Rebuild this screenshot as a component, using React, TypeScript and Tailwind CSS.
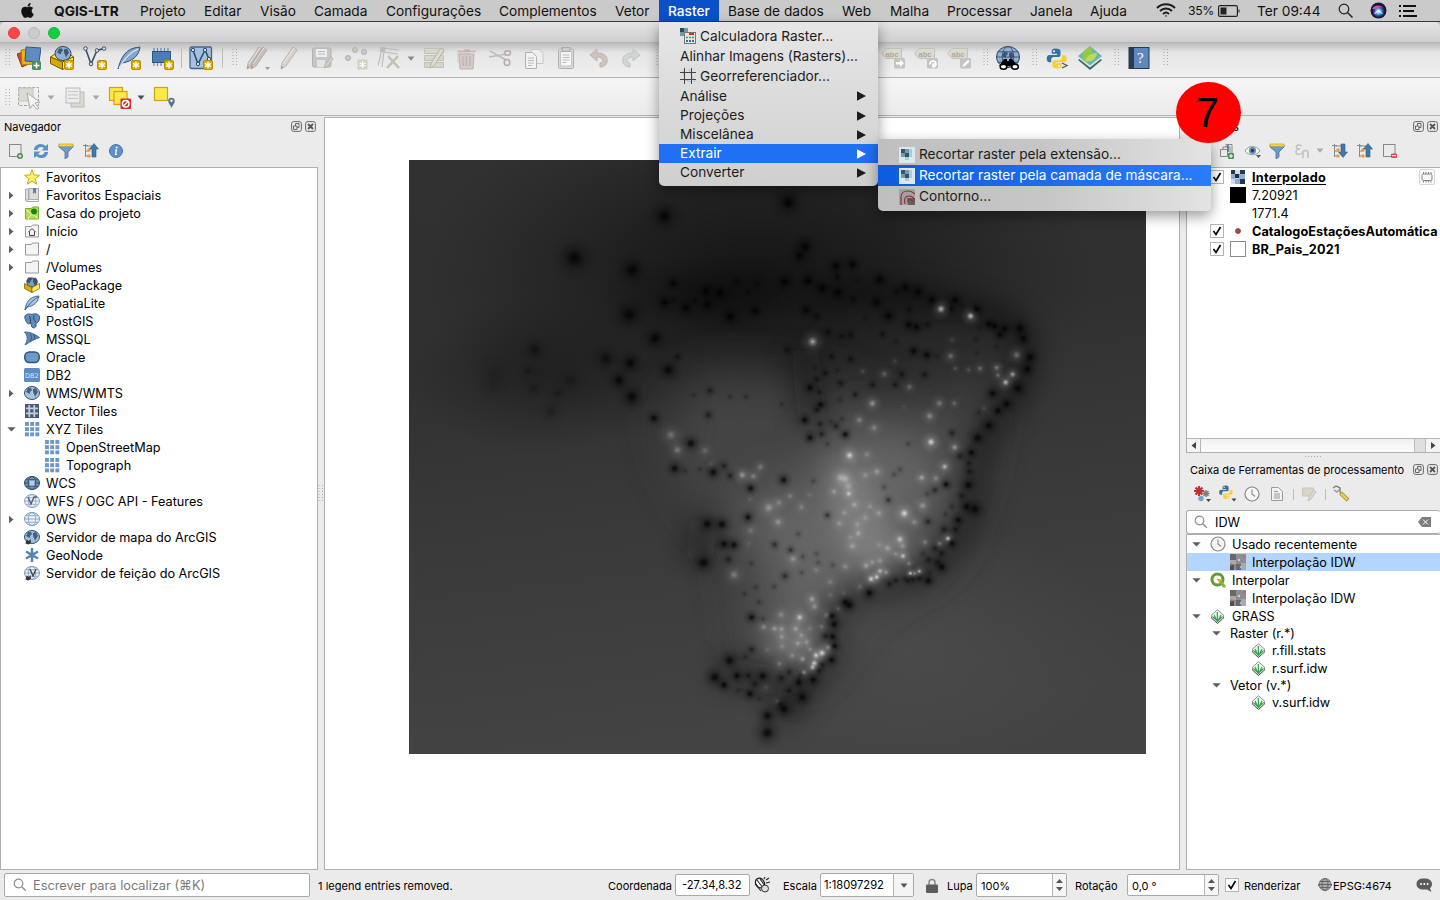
import React from "react";
import { FaApple } from "react-icons/fa";

type P = { children?: React.ReactNode; className?: string };

const Svg = ({ s = 16, className = "", children }: P & { s?: number }) => (
  <svg width={s} height={s} viewBox={`0 0 ${s} ${s}`} className={`shrink-0 ${className}`} fill="none">
    {children}
  </svg>
);

/* ---------- small shared glyphs ---------- */

const Star = () => (
  <g>
    <rect x="14.5" y="14.5" width="9" height="9" rx="1.5" fill="#d9a900" stroke="#b98d00" />
    <path d="M19 15.5v7M16 17.3l6 3.4M22 17.3l-6 3.4" stroke="#fff" strokeWidth="1.4" />
  </g>
);

const Caret = ({ className = "", color = "#6b6b6b" }: { className?: string; color?: string }) => (
  <svg width="8" height="5" viewBox="0 0 8 5" className={`shrink-0 ${className}`}>
    <path d="M0.5 0.5h7L4 4.7z" fill={color} />
  </svg>
);

const Handle = ({ className = "", h = 18 }: { className?: string; h?: number }) => (
  <svg width="6" height={h} className={`shrink-0 ${className}`}>
    <path d={`M1 0v${h}M4.5 0v${h}`} stroke="#a9a9a9" strokeWidth="1" strokeDasharray="1 2" />
  </svg>
);

const Sep = ({ className = "" }: { className?: string }) => (
  <div className={`h-5 w-px shrink-0 bg-[#bdbdbd] ${className}`} />
);

const Globe = ({ cx = 8, cy = 8, rx = 7.5, ry = 6.5, fill = "#7b9cc4", line = "#2f4d73", land = true, grid = false }) => (
  <g>
    <ellipse cx={cx} cy={cy} rx={rx} ry={ry} fill={fill} stroke={line} strokeWidth="1" />
    {land && (
      <path
        d={`M${cx - 6} ${cy - 1}l2-4 3 0 1 2-2 2 0 2-2-1zM${cx + 1} ${cy - 4}l3-1 2 4-2 3-1 2-1-3-1-2z`}
        fill={line}
        opacity=".85"
      />
    )}
    {grid && (
      <g stroke={line} strokeWidth=".8">
        <ellipse cx={cx} cy={cy} rx={rx / 2} ry={ry} />
        <path d={`M${cx - rx} ${cy}h${rx * 2}M${cx - rx + 1} ${cy - ry / 2}h${rx * 2 - 2}M${cx - rx + 1} ${cy + ry / 2}h${rx * 2 - 2}`} />
      </g>
    )}
  </g>
);

const Python = () => (
  <g>
    <path d="M8 0.5c-3 0-3.5 1-3.5 2.5V5H9v1H2.500C1 6 .2 7.200.2 9.200s.9 3 2.300 3H4V10c0-1.500 1-2.300 2.300-2.300h4C11.500 7.700 12 6.800 12 5.800V3C12 1.200 10.600.5 8 .5z" fill="#36719f" />
    <circle cx="6.400" cy="2.800" r=".8" fill="#fff" />
    <path d="M9 17.500c3 0 3.800-1 3.800-2.400v-2H8v-1h7c1.500 0 2.300-1.200 2.300-3.200s-1-3-2.300-3h-1.700v2.200c0 1.500-1 2.400-2.300 2.400H7c-1.300 0-2 .9-2 2v2.400c0 1.800 1.500 2.600 4 2.600z" fill="#fbcf3b" />
    <circle cx="10.800" cy="15.300" r=".8" fill="#fff" />
  </g>
);

/* ---------- application menu bar ---------- */

const menus: [string, string][] = [
  ["QGIS-LTR", "w-[86px] font-bold"],
  ["Projeto", "w-[64px]"],
  ["Editar", "w-[56px]"],
  ["Visão", "w-[54px]"],
  ["Camada", "w-[72px]"],
  ["Configurações", "w-[113px]"],
  ["Complementos", "w-[116px]"],
  ["Vetor", "w-[44px]"],
];
const menus2: [string, string][] = [
  ["Base de dados", "w-[114px]"],
  ["Web", "w-[48px]"],
  ["Malha", "w-[57px]"],
  ["Processar", "w-[83px]"],
  ["Janela", "w-[60px]"],
  ["Ajuda", "w-[66px]"],
];

function MenuBar() {
  return (
    <div className="flex h-[22px] shrink-0 items-center border-b border-[#3a3a3a] bg-[#cacaca] text-[13.7px] text-[#111]">
      <FaApple className="ml-[20px] h-[17px] w-[15px] shrink-0" />
      <div className="w-[19px] shrink-0" />
      {menus.map(([t, c]) => (
        <span key={t} className={`shrink-0 whitespace-nowrap pt-[2px] ${c}`}>{t}</span>
      ))}
      <span className="flex h-[21px] w-[60px] shrink-0 items-center bg-[#0a50c8] pl-[9px] pt-[2px] font-medium text-white">Raster</span>
      <div className="w-[9px] shrink-0" />
      {menus2.map(([t, c]) => (
        <span key={t} className={`shrink-0 whitespace-nowrap pt-[2px] ${c}`}>{t}</span>
      ))}
      <svg width="20" height="15" viewBox="0 0 20 15" fill="none" stroke="#1a1a1a" strokeWidth="1.900">
        <path d="M1 5c5-5 13-5 18 0M4 8c3.500-3.300 8.500-3.300 12 0M7 11c1.800-1.700 4.200-1.700 6 0" />
        <path d="M8.800 12.600L10 14l1.200-1.400z" fill="#1a1a1a" stroke="none" />
      </svg>
      <span className="ml-[12px] w-[30px] pt-[2px] text-[12.200px] tracking-tight">35%</span>
      <svg width="23" height="12" viewBox="0 0 23 12" fill="none">
        <rect x=".6" y=".6" width="18.800" height="10.800" rx="1.500" stroke="#222" strokeWidth="1.200" />
        <rect x="2.500" y="2.500" width="6" height="7" fill="#222" />
        <path d="M20.500 4v4c1.500-.5 1.500-3.500 0-4z" fill="#222" />
      </svg>
      <span className="ml-[16px] w-[81px] whitespace-nowrap pt-[2px]">Ter 09:44</span>
      <svg width="15" height="15" viewBox="0 0 15 15" fill="none" stroke="#222" strokeWidth="1.200">
        <circle cx="6" cy="6" r="4.800" /><path d="M9.500 9.500l5 5" strokeWidth="1.500" />
      </svg>
      <svg width="17" height="17" viewBox="0 0 17 17" className="ml-[17px]">
        <defs>
          <radialGradient id="siri"><stop offset="0" stopColor="#fff" /><stop offset=".3" stopColor="#6ad8f0" /><stop offset=".65" stopColor="#3b50b8" /><stop offset="1" stopColor="#151540" /></radialGradient>
        </defs>
        <circle cx="8.500" cy="8.500" r="8" fill="#191335" />
        <circle cx="8.500" cy="9.500" r="6.300" fill="url(#siri)" />
        <path d="M2 7c2-4 7-5 12-1-3-1-5-1-7 1z" fill="#d54cae" />
        <path d="M4.500 12l4-4 4 4" stroke="#fff" strokeWidth="1" fill="none" />
      </svg>
      <svg width="18" height="12" viewBox="0 0 18 12" className="ml-[12px]" stroke="#111" strokeWidth="2">
        <path d="M0 1h2M4 1h13M0 6h2M4 6h11M0 11h2M4 11h14" />
      </svg>
    </div>
  );
}

/* ---------- toolbars ---------- */

const Pencil = ({ x = 0, o = 1, fill = "#d2ccc2" }) => (
  <g transform={`translate(${x} 0)`} opacity={o}>
    <path d="M16 1l4 3L9 20l-5 3 1-6z" fill={fill} stroke="#aaa49c" />
    <path d="M17 2L6 18" stroke="#efece8" strokeWidth="1" />
    <path d="M4 23l.5-3 2 1.500z" fill="#888" />
  </g>
);

const LabelIcon = ({ className, kind }: { className: string; kind: number }) => (
  <Svg s={24} className={className}>
    <path d="M0.500 7.500L5 2.500h15.500v10H5z" fill="#dcdad0" stroke="#c3c0b4" />
    <text x="4.500" y="10.500" fontSize="7.500" fontWeight="700" fill="#aaa89e" fontFamily="Liberation Sans, sans-serif">abc</text>
    <rect x="13" y="12" width="11" height="10.500" rx="1.500" fill="#c4c4c2" />
    {kind === 0 && <path d="M15 16h4v-2.500l4 3.800-4 3.800v-2.600h-4z" fill="#fff" />}
    {kind === 1 && <path d="M16 18.500a3 3 0 1 1 3 2.500M19 21.500v-3.500h3" stroke="#fff" strokeWidth="1.700" />}
    {kind === 2 && <path d="M15.500 21l1-3 4.500-4 1.500 1.500-4.500 4.500z" fill="#fff" />}
  </Svg>
);

function ToolbarMain() {
  return (
    <div className="flex h-[35px] shrink-0 items-center border-b border-[#b2b2b2] bg-gradient-to-b from-[#bdbdbd] via-[#e6e6e6] via-30% to-[#f0f0f0] pb-[4px]">
      <Handle className="ml-[5px]" />
      <Svg s={24} className="ml-[6px]">
        <path d="M0 8l12-4 4 12-11 5z" fill="#c4501f" stroke="#8e3a17" />
        <path d="M4 4l13-1-1 15-11 1z" fill="#e8b31d" stroke="#a57c0c" />
        <path d="M9 1l15 1-2 14-14-1z" fill="#5f8cc0" stroke="#31577f" />
        <rect x="15" y="15" width="9" height="9" rx="1.500" fill="#4f8c58" /><path d="M19.500 16.500v6M16.500 19.500h6" stroke="#fff" strokeWidth="1.600" />
      </Svg>
      <Svg s={24} className="ml-[9px]">
        <path d="M.5 11l6-4 6 2 6-2 5 4-11 5z" fill="#ffe86a" stroke="#7a5a00" />
        <Globe cx={13} cy={7.500} rx={8} ry={7} fill="#8eb0d6" line="#31465f" />
        <path d="M.5 11l12 5v7.500l-12-6z" fill="#d9a900" stroke="#7a5a00" /><path d="M12.500 16l11-5v7l-11 5.500z" fill="#fcf15c" stroke="#7a5a00" />
        <Star />
      </Svg>
      <Svg s={24} className="ml-[9px]">
        <path d="M2.500 2.500L8 18 14 4.500l7-2" stroke="#3d5064" strokeWidth="1.600" />
        {[[2.500, 2.500], [8, 18], [14, 4.500], [21, 2.500]].map(([x, y]) => <circle key={x} cx={x} cy={y} r="1.800" fill="#dce6ee" stroke="#3d5064" />)}
        <Star />
      </Svg>
      <Svg s={24} className="ml-[10px]">
        <path d="M1 23C4 12 8 2 23 1c-1 8-6 14-18 16z" fill="#84a6cd" stroke="#34547a" /><path d="M2 22C7 13 12 7 21 3" stroke="#dce9f7" strokeWidth="1.300" />
        <Star />
      </Svg>
      <Svg s={24} className="ml-[9px]">
        <path d="M4 2v18M7.500 2v18M11 2v18M14.500 2v18M18 2v18" stroke="#6787ad" strokeWidth="1.200" />
        <rect x="2.500" y="5.500" width="18" height="11" fill="#4c7cb5" stroke="#2e5484" /><Star />
      </Svg>
      <Sep className="ml-[7px]" />
      <Svg s={24} className="ml-[7px]">
        <rect x="1" y="1" width="21.500" height="21.500" rx="1.500" fill="#a5c0e1" stroke="#41658e" strokeWidth="1.300" />
        <path d="M4 4l5 14 7-14 4 9" stroke="#27496f" strokeWidth="1.500" />
        {[[4, 4], [9, 18], [16, 4], [20, 13]].map(([x, y]) => <circle key={x} cx={x} cy={y} r="1.700" fill="#dce6ee" stroke="#27496f" />)}
        <Star />
      </Svg>
      <Sep className="ml-[9px]" />
      <Handle className="ml-[9px]" />
      <Svg s={24} className="ml-[8px]"><Pencil x={-3} o={0.8} fill="#c0b4b0" /><Pencil x={1} o={0.8} fill="#c0b4b0" /><path d="M19 21h5l-2.500 3z" fill="#999" /></Svg>
      <Svg s={24} className="ml-[7px]"><Pencil o={0.75} /></Svg>
      <Svg s={24} className="ml-[9px]">
        <rect x="2.500" y="2" width="18.500" height="19" rx="1.500" fill="#c6c6c6" stroke="#b0b0b0" /><rect x="6" y="3" width="11" height="8" fill="#eee" /><path d="M8 5.500h7M8 8h7" stroke="#bbb" /><rect x="7" y="14" width="8" height="7" fill="#e4e4e4" />
        <path d="M21 11l2 2-6 8-3 1 1-3z" fill="#d8d0c8" stroke="#bbb3ab" />
      </Svg>
      <Svg s={24} className="ml-[10px]">
        {[[4, 12], [11, 4], [20, 6]].map(([x, y]) => <circle key={x} cx={x} cy={y} r="2.500" fill="#c8c8c8" stroke="#b0b0b0" />)}
        <rect x="13.500" y="13.500" width="10" height="10" rx="1" fill="#d2cfc0" /><path d="M18.500 15v7M15.500 16.800l6 3.400M21.500 16.800l-6 3.400" stroke="#fff" strokeWidth="1.300" />
      </Svg>
      <Svg s={24} className="ml-[10px]">
        <path d="M4 3L0 20M6 5L4 21M4 2l17 2M5 6l15 2" stroke="#bbb" strokeWidth="1.100" /><rect x="2" y="1" width="5" height="5" fill="#bbb" />
        <path d="M10 10l11 12M20 10L9 22" stroke="#c3c0b2" strokeWidth="2.500" />
      </Svg>
      <Caret className="ml-[5px]" color="#8b8b8b" />
      <Svg s={24} className="ml-[7px]">
        <path d="M2.500 2.500h19v5h-19zM2.500 9.500h19v5h-19zM2.500 16.500h19v5h-19z" fill="#d6d6ca" stroke="#c2c2b4" />
        <path d="M19 2l3 2L12 20l-4 2 1-5z" fill="#e0dad5" stroke="#bbb3ab" />
      </Svg>
      <Svg s={24} className="ml-[8px]">
        <path d="M3 2h13v15H3z" fill="#dcd8d4" /><path d="M5 8h15l-1 15H6z" fill="#d6cbc9" stroke="#bdb1af" /><path d="M4 5.500h18M10 4h6M9 10v10M12.500 10v10M16 10v10" stroke="#c2b7b5" strokeWidth="1.500" />
      </Svg>
      <Svg s={24} className="ml-[10px]">
        <path d="M2 5l16 9M1 11l17-3" stroke="#bdbdbd" strokeWidth="1.500" /><ellipse cx="19.500" cy="7" rx="3" ry="2.300" stroke="#b5aeac" strokeWidth="1.600" /><ellipse cx="19" cy="16.500" rx="2.800" ry="3" stroke="#b5aeac" strokeWidth="1.600" />
      </Svg>
      <Svg s={24} className="ml-[9px]">
        <path d="M10 3.500h8l4 4v10H10z" fill="#eee" stroke="#c5c5c5" /><path d="M4.500 6.500h7l4 4v12h-11z" fill="#f3f3f3" stroke="#b3b3b3" /><path d="M7 12h6M7 14.500h6M7 17h6M7 19.500h4" stroke="#bbb" />
      </Svg>
      <Svg s={24} className="ml-[9px]">
        <rect x="4.500" y="3" width="15" height="19.500" rx="1" fill="#dcdbd7" stroke="#b3b1ac" /><rect x="6.500" y="5.500" width="11" height="14.500" fill="#f6f6f6" stroke="#c5c5c5" /><rect x="8" y="1.500" width="8" height="4" fill="#ccc" stroke="#aaa" /><path d="M8.500 9h7M8.500 11.500h7M8.500 14h7M8.500 16.500h4" stroke="#bbb" />
      </Svg>
      <Svg s={24} className="ml-[9px]"><path d="M3 9l7-6v4c8 0 11 4 10 9-1 4-4 5-7 5v-4c4 0 4-6-3-6v4z" fill="#ccc4bf" stroke="#bcb4af" /></Svg>
      <Svg s={24} className="ml-[8px]"><path d="M21 9l-7-6v4C6 7 3 11 4 16c1 4 4 5 7 5v-4c-4 0-4-6 3-6v4z" fill="#d2d6d2" stroke="#c0c4c0" /></Svg>
      <Handle className="ml-[13px]" />
      <LabelIcon className="ml-[219px]" kind={0} />
      <LabelIcon className="ml-[9px]" kind={1} />
      <LabelIcon className="ml-[9px]" kind={2} />
      <Handle className="ml-[12px]" />
      <Svg s={24} className="ml-[7px]">
        <Globe cx={12} cy={11} rx={11.500} ry={10.500} fill="#8fb1d8" line="#31465f" grid />
        <path d="M8 13h3v2h2v-2h3l6 7H3z" fill="#000" /><ellipse cx="7.500" cy="20.700" rx="3.300" ry="2.500" fill="#fff" stroke="#000" strokeWidth="1.500" /><ellipse cx="19" cy="20.700" rx="3.300" ry="2.500" fill="#fff" stroke="#000" strokeWidth="1.500" />
      </Svg>
      <Handle className="ml-[12px]" />
      <Svg s={24} className="ml-[7px]">
        <g transform="translate(1.500 2) scale(1.170)"><Python /></g><path d="M17 17l5 2.500-5 2.500" stroke="#555" strokeWidth="1.300" />
      </Svg>
      <Svg s={24} className="ml-[9px]">
        <path d="M12 5l12 9-12 10L0 14z" fill="#43625f" /><path d="M12 3l12 9-12 9.500L0 12z" fill="#d8ecea" /><path d="M12 0l12 10-12 9.500L0 10z" fill="#6bb5b0" />
        <path d="M5 15C3 6 8 2 13 1c3 6 0 12-8 14z" fill="#93c93f" /><path d="M7 15c2-6 7-8 12-8 0 5-5 10-12 8z" fill="#b9dc5a" />
      </Svg>
      <Handle className="ml-[12px]" />
      <Svg s={24} className="ml-[7px]">
        <rect x="2" y="1.500" width="20" height="21" fill="#5b88be" stroke="#27394d" /><rect x="2" y="1.500" width="5" height="21" fill="#2a3b4f" />
        <text x="10" y="17" fontSize="15" fill="#fff" fontFamily="Liberation Serif, serif">?</text>
      </Svg>
      <Handle className="ml-[12px]" />
    </div>
  );
}

function ToolbarSelection() {
  return (
    <div className="flex h-[38px] shrink-0 items-center border-b border-[#b2b2b2] bg-gradient-to-b from-[#f6f6f6] to-[#ebebeb] pt-[2px]">
      <Handle className="ml-[5px]" />
      <Svg s={24} className="ml-[6px]">
        <rect x="1.500" y="1.500" width="20" height="18" stroke="#a5a5a5" strokeDasharray="3 1.500" /><rect x="2" y="2" width="14" height="13" fill="#dcdad0" stroke="#c8c6bb" />
        <path d="M10 7l13 9-5 1 4 5-2 1.500-4-5-3 4z" fill="#f5f5f5" stroke="#aaa" />
      </Svg>
      <Caret className="ml-[6px]" color="#a8a8a8" />
      <Svg s={24} className="ml-[8px]">
        <rect x="8" y="6" width="13" height="15" fill="#dcdad0" stroke="#bbb9b0" /><rect x="3" y="2" width="14" height="15" fill="#ececec" stroke="#bbb" /><path d="M5 5.500h10M5 9h10M5 12.500h10" stroke="#c6c6c6" strokeWidth="1.200" />
      </Svg>
      <Caret className="ml-[5px]" color="#a8a8a8" />
      <Svg s={24} className="ml-[8px]">
        <rect x="1.500" y="1.500" width="13" height="13" fill="#fbe84d" stroke="#cda50f" strokeWidth="1.200" /><rect x="6" y="5.500" width="13" height="13" fill="#fbe84d" stroke="#cda50f" strokeWidth="1.200" />
        <rect x="12.500" y="12.500" width="10.500" height="10.500" rx="1" fill="#d62c2c" /><circle cx="17.700" cy="17.700" r="3.300" stroke="#fff" strokeWidth="1.500" /><path d="M15.500 20l4.500-4.500" stroke="#fff" strokeWidth="1.300" />
      </Svg>
      <Caret className="ml-[5px]" color="#4e4e4e" />
      <Svg s={24} className="ml-[8px]">
        <rect x="1.500" y="1.500" width="13" height="13" fill="#fbe84d" stroke="#cda50f" strokeWidth="1.200" />
        <path d="M18.500 22c-1-3-3.300-4.500-3.300-7a3.300 3.300 0 0 1 6.600 0c0 2.500-2.300 4-3.300 7z" fill="#4f7693" /><circle cx="18.500" cy="14.800" r="1.200" fill="#fff" />
      </Svg>
    </div>
  );
}

/* ---------- docks ---------- */

const DockButtons = ({ className = "" }: P) => (
  <div className={`flex gap-[3px] pb-px ${className}`}>
    <Svg s={11}><rect x=".6" y=".6" width="9.800" height="9.800" rx="2" stroke="#666" /><path d="M2.500 5h3.500v3.500H2.500zM4.500 5V2.500H8v4H6" stroke="#666" /></Svg>
    <Svg s={11}><rect x=".6" y=".6" width="9.800" height="9.800" rx="2" stroke="#666" /><path d="M3 3l5 5M8 3L3 8" stroke="#555" strokeWidth="1.800" /></Svg>
  </div>
);

const AddIcon = () => <Svg><rect x="1.500" y="1.500" width="11.500" height="12" stroke="#888" /><circle cx="12" cy="13" r="3" fill="#4f8c58" /><path d="M12 11.500v3M10.500 13h3" stroke="#fff" /></Svg>;
const Refresh = () => (
  <Svg>
    <path d="M1 7c0-6 8-8 11.500-4L15 1v6.500H8.500L11 5C8 3 5 4 4.500 7z" fill="#5b8fc7" /><path d="M15 9c0 6-8 8-11.500 4L1 15V8.500h6.500L5 11c3 2 6 1 6.500-2z" fill="#5b8fc7" />
  </Svg>
);
const Filter = () => <Svg><path d="M1 2h14v2L10 9v5l-3 2V9L1 4z" fill="#6b9bd1" stroke="#3c678f" strokeWidth=".7" /><rect x="1" y="1" width="14" height="2.500" fill="#f1dc43" stroke="#b89c20" strokeWidth=".6" /></Svg>;
const TreeArrow = ({ down = false }) => (
  <Svg>
    <path d="M2.500 1v13M2.500 3h7M2.500 8h4M2.500 13h4M0 2.500h5" stroke="#8a8a8a" /><rect x="4.500" y="5.500" width="3" height="3" fill="#f59b33" /><rect x="4.500" y="11.500" width="3" height="3" fill="#f59b33" />
    {down ? <path d="M9 1h4v8h2.500L11 14.500 6.500 9H9z" fill="#4278ae" stroke="#2e5a88" strokeWidth=".6" /> : <path d="M9 14h4V6h2.500L11 .5 6.500 6H9z" fill="#4278ae" stroke="#2e5a88" strokeWidth=".6" />}
  </Svg>
);
const Info = () => <Svg><circle cx="8" cy="8" r="6.500" fill="#5e8fc9" stroke="#4877ab" /><path d="M7 7h1.500l-1 4.500h1.500" stroke="#fff" strokeWidth="1.200" /><circle cx="8.700" cy="4.500" r="1" fill="#fff" /></Svg>;

const Folder = ({ fill = "#f3f3f3", stroke = "#999", children }: P & { fill?: string; stroke?: string }) => (
  <Svg><path d="M1.500 3.500h6l1-1.500h6v12h-13z" fill={fill} stroke={stroke} />{children}</Svg>
);

const Squares = ({ fill = "#6b97c9" }) => (
  <Svg>{[1, 6.200, 11.400].map((x) => [1, 6.200, 11.400].map((y) => <rect key={`${x}-${y}`} x={x} y={y} width="3.900" height="3.900" fill={fill} />))}</Svg>
);

const ic: Record<string, React.ReactNode> = {
  star: <Svg><path d="M8 .8l2 5.200 5.500.2-4.300 3.600 1.500 5.400L8 12.200l-4.700 3 1.500-5.400L.5 6.200 6 6z" fill="#fdf06a" stroke="#d3a816" /></Svg>,
  book: <Svg><path d="M1.500 2h3v11h-3zM5 1.500h9.500v11H5z" fill="#dcdcdc" stroke="#ababab" /><path d="M1.500 13l1 1.500h12v-2" stroke="#aaa" /><path d="M9 1h3v6l-1.500-1.500L9 7z" fill="#5683b5" /></Svg>,
  proj: <Folder fill="#b4dd4e" stroke="#7cae2a"><path d="M2 5l12 8M8 8l-4 6" stroke="#eef7d0" /><circle cx="10" cy="6.500" r="3" fill="#128a12" /></Folder>,
  home: <Folder><path d="M4.500 9L8 5.500 11.500 9M5.500 8.500v4h5v-4" stroke="#444" /></Folder>,
  folder: <Folder />,
  gpkg: <Svg><Globe cx={8} cy={5.500} rx={5} ry={4.500} line="#31465f" /><path d="M.5 6.500L8 10.500v5l-7.500-4z" fill="#dba90c" stroke="#7a5a00" strokeWidth=".7" /><path d="M8 10.500l7.500-4v5L8 15.500z" fill="#fcee59" stroke="#7a5a00" strokeWidth=".7" /></Svg>,
  lite: <Svg><path d="M1 15C2 8 5 1.500 15 1c-1 6-5 10-12 11z" fill="#a9c4e2" stroke="#3c648f" /><path d="M1 15C5 9 9 5 14 2" stroke="#3c648f" /></Svg>,
  pg: <Svg><path d="M1 3c2-3 5-2 7-1.500C11 0 15 1 15.500 4c.3 3-1 6-3.500 6v3c0 2-4 3-4.500 0L7 10c-3 2-4 0-5-2C1 6 .5 4.500 1 3z" fill="#608dbd" stroke="#35587f" /><path d="M5.500 3c1 2 1 5 1 7M10 2.500c-1 3 0 5 2 6.500" stroke="#24415f" /></Svg>,
  mssql: <Svg><path d="M.5 1c6 0 10 2 15 5.500C11 8 7 10 1 14c3-5 3-9-.5-13z" fill="#5f8ab8" stroke="#43678c" /><path d="M6 2.500c2 3 2 5 0 8M9.500 3.500c1.500 2 1.500 4 0 5.500" stroke="#2f5074" /></Svg>,
  oracle: <Svg><rect x=".8" y="3" width="14.400" height="10.500" rx="4.500" fill="#6d9aca" stroke="#2f5277" strokeWidth="1.500" /></Svg>,
  db2: <Svg><rect width="16" height="14" y="1" rx="1.500" fill="#5b8cc4" /><text x="1" y="10.500" fontSize="6.500" fill="#d9e8f8" fontFamily="DejaVu Sans, sans-serif">DB2</text></Svg>,
  wms: <Svg><Globe fill="#a9c2dd" /></Svg>,
  vt: <Svg><rect x="1" y="1" width="14" height="14" fill="#46597a" /><path d="M2 5.300h12M2 10.300h12M5.300 2v12M10.300 2v12" stroke="#e5ebf3" strokeWidth="1.800" opacity=".8" /><rect x="1.500" y="1.500" width="13" height="13" stroke="#46597a" /></Svg>,
  xyz: <Squares />,
  wcs: <Svg><Globe fill="#6f93bb" line="#2c4766" land={false} grid /><rect x="5.500" y="5.500" width="5" height="5" fill="#b8cee6" /></Svg>,
  wfs: <Svg><Globe fill="#eef3f9" line="#86a3c4" land={false} grid /><path d="M4 4l3 7 3-7 3 0" stroke="#555f6b" strokeWidth="1.400" /></Svg>,
  ows: <Svg><Globe fill="#eef4fb" line="#7298c4" land={false} grid /></Svg>,
  arcm: <Svg><Globe fill="#a3bfde" /><path d="M1.500 14.500l1-4 2.500 1.500 1.500-2 .5 3.500-2.500 2z" fill="#333" /></Svg>,
  node: <Svg><path d="M8 1v14M2 4.500l12 7M14 4.500l-12 7" stroke="#5682b0" strokeWidth="2.500" /><circle cx="8" cy="8" r="2.200" fill="#5682b0" /></Svg>,
  arcf: <Svg><Globe fill="#edf3fa" line="#7796ba" land={false} grid /><path d="M6 4l3 7 3-7" stroke="#345" strokeWidth="1.300" /><path d="M1.500 14.500l1-4 2.500 1.500 1.500-2 .5 3.500-2.500 2z" fill="#333" /></Svg>,
};

const tree: [string, string, string?, boolean?][] = [
  ["star", "Favoritos"],
  ["book", "Favoritos Espaciais", "r"],
  ["proj", "Casa do projeto", "r"],
  ["home", "Início", "r"],
  ["folder", "/", "r"],
  ["folder", "/Volumes", "r"],
  ["gpkg", "GeoPackage"],
  ["lite", "SpatiaLite"],
  ["pg", "PostGIS"],
  ["mssql", "MSSQL"],
  ["oracle", "Oracle"],
  ["db2", "DB2"],
  ["wms", "WMS/WMTS", "r"],
  ["vt", "Vector Tiles"],
  ["xyz", "XYZ Tiles", "d"],
  ["xyz", "OpenStreetMap", "", true],
  ["xyz", "Topograph", "", true],
  ["wcs", "WCS"],
  ["wfs", "WFS / OGC API - Features"],
  ["ows", "OWS", "r"],
  ["arcm", "Servidor de mapa do ArcGIS"],
  ["node", "GeoNode"],
  ["arcf", "Servidor de feição do ArcGIS"],
];

const Twisty = ({ dir }: { dir?: string }) => (
  <svg width="9" height="9" viewBox="0 0 9 9" className="shrink-0">
    {dir === "r" && <path d="M2 .7L6.500 4.500 2 8.300z" fill="#5f5f5f" />}
    {dir === "d" && <path d="M.3 2.200h8.400L4.500 6.500z" fill="#5f5f5f" />}
  </svg>
);

function Browser() {
  return (
    <div className="flex w-[318px] shrink-0 flex-col">
      <div className="flex h-[20px] items-center pl-[4px] pr-[2px] text-[11px]">
        <span className="grow">Navegador</span>
        <DockButtons />
      </div>
      <div className="flex h-[30px] items-center gap-[9px] pl-[8px] pb-[3px]">
        <AddIcon /><Refresh /><Filter /><TreeArrow /><Info />
      </div>
      <div className="grow border border-[#b0b0b0] bg-white text-[12.700px]">
        {tree.map(([k, t, d, child]) => (
          <div key={t} className={`flex h-[18px] items-center ${child ? "pl-[26px]" : "pl-[6px]"}`}>
            <Twisty dir={d} />
            <span className="ml-[8px] mr-[6px]">{ic[k]}</span>
            <span className="whitespace-nowrap pt-[2px]">{t}</span>
          </div>
        ))}
      </div>
    </div>
  );
}

/* ---------- raster map ---------- */

/* Station positions with low values: x, y, radius (raster canvas units, 3 per pixel). */
const low: number[] = [
  45, 295, 46, 85, 390, 44, 42, 534, 30, 100, 130, 30, 74, 188, 34, 102, 180, 20, 138, 203, 34, 166, 182, 22, 198, 154, 34, 202, 194, 32, 240, 158, 36, 271, 230, 40, 291, 126, 28, 325, 155, 18, 352, 132, 28, 346, 212, 30,
  434, 125, 40, 504, 121, 38, 478, 48, 38, 495, 20, 46, 547, 144, 34, 588, 78, 36, 637, 73, 36, 592, 110, 24, 652, 122, 20, 594, 157, 32, 640, 177, 24, 720, 118, 36, 769, 155, 26, 796, 143, 34, 834, 156, 36, 875, 180, 30, 710, 187, 32, 745, 228, 36, 676, 234, 18, 498, 211, 30, 530, 229, 26, 565, 277, 26, 605, 288, 24, 632, 285, 26, 728, 282, 22, 768, 305, 20,
  945, 180, 32, 934, 207, 24, 1010, 208, 30, 966, 198, 18, 808, 208, 22, 806, 254, 30, 830, 262, 30, 862, 254, 24, 821, 333, 28, 860, 345, 28, 892, 350, 20, 1046, 252, 28, 1064, 258, 28, 1094, 266, 30, 1140, 265, 38, 1080, 284, 28, 1018, 264, 20, 1150, 295, 30, 1170, 352, 34, 1162, 388, 32, 1134, 445, 36, 1100, 492, 32, 1058, 460, 32, 1074, 513, 28, 1046, 557, 36, 1013, 594, 38, 994, 638, 30, 960, 648, 26, 986, 670, 22, 988, 695, 26, 985, 735, 34, 966, 768, 26, 980, 800, 32, 1005, 808, 38, 955, 840, 28, 947, 868, 26, 1015, 518, 20, 1070, 320, 20, 1012, 340, 16, 1008, 298, 18,
  112, 350, 24, 210, 452, 24, 205, 525, 26, 162, 465, 18, 318, 470, 20, 270, 470, 18, 425, 493, 18, 442, 329, 26, 153, 610, 36, 104, 685, 32, 134, 692, 20, 180, 688, 18, 220, 697, 34, 252, 678, 26, 270, 707, 24, 332, 745, 28, 431, 720, 30, 324, 832, 30, 202, 852, 40, 246, 853, 36, 252, 912, 34, 282, 915, 30, 190, 968, 46, 265, 958, 26, 335, 970, 18, 404, 914, 24, 452, 930, 22, 488, 950, 20, 435, 1008, 26, 403, 1040, 20, 347, 1042, 20, 313, 1062, 18, 357, 1087, 20, 520, 723, 18, 562, 826, 22, 475, 882, 20, 535, 968, 18, 530, 941, 18, 578, 975, 18, 485, 998, 18,
  575, 350, 22, 632, 358, 26, 556, 400, 22, 592, 392, 18, 525, 385, 18, 510, 443, 28, 530, 418, 22, 538, 456, 22, 602, 430, 24, 542, 494, 28, 530, 510, 22, 600, 480, 20, 494, 540, 28, 541, 552, 24, 572, 545, 18, 588, 558, 26, 545, 582, 24, 510, 593, 28, 616, 583, 28, 606, 537, 20, 562, 612, 18, 646, 464, 22, 698, 434, 24, 785, 402, 26, 766, 434, 22, 854, 404, 24, 936, 579, 24, 805, 612, 18, 780, 688, 20, 762, 704, 20, 732, 742, 20, 745, 780, 22, 918, 733, 28, 885, 750, 24, 862, 762, 20, 864, 845, 26, 936, 800, 20, 916, 823, 16, 912, 868, 26,
  936, 910, 28, 905, 940, 24, 885, 925, 22, 848, 941, 20, 866, 960, 24, 892, 967, 26, 905, 981, 32, 865, 1022, 30, 838, 1016, 24, 818, 1018, 22, 803, 1022, 22, 793, 1016, 20, 768, 1021, 24, 748, 1032, 26, 870, 996, 18, 688, 1059, 32, 616, 1087, 30, 628, 1095, 32, 576, 1128, 28, 583, 1153, 32, 556, 1188, 26, 578, 1190, 28, 584, 1218, 28, 575, 1260, 30, 547, 1275, 24, 537, 1292, 26, 520, 1320, 32, 487, 1372, 36, 447, 1352, 24, 476, 1327, 30, 482, 1305, 20, 424, 1314, 26, 447, 1296, 22, 432, 1407, 40, 422, 1393, 26, 382, 1427, 40, 382, 1478, 52, 335, 1132, 28, 368, 1137, 20, 335, 1228, 24, 315, 1250, 20, 269, 1262, 38, 224, 1312, 42, 252, 1335, 30, 291, 1307, 28, 325, 1307, 26, 368, 1308, 30, 344, 1332, 26, 330, 1362, 28, 295, 1352, 20, 358, 1376, 18,
  73, -72, 60, 445, -113, 58, -197, 54, 70, -24, 90, 58, -33, 223, 56, -317, 328, 46, -102, 355, 52, -29, 369, 46, -63, 421, 44, -208, 421, 52, -24, 470, 48, -245, 461, 38, -336, 393, 34, -318, 446, 36, -268, 515, 50, -438, 400, 76, -440, 440, 60,
];

/* Station positions with high values: x, y, radius, opacity in percent. */
const high: number[] = [
  903, 207, 30, 85, 992, 228, 28, 95, 518, 305, 36, 75, 932, 348, 26, 50, 936, 300, 18, 20, 1130, 345, 30, 55, 1118, 403, 24, 75, 1097, 427, 26, 85, 1070, 383, 22, 55, 1074, 406, 18, 50, 1020, 385, 20, 45, 946, 385, 16, 30, 986, 390, 16, 30, 733, 402, 24, 40, 808, 441, 24, 40, 765, 363, 18, 20, 668, 394, 18, 25, 697, 490, 28, 70, 658, 540, 24, 50, 702, 563, 28, 45, 898, 490, 26, 50, 943, 490, 20, 35, 869, 528, 28, 60, 873, 606, 30, 100, 944, 622, 24, 70, 914, 680, 26, 75, 888, 715, 24, 45, 845, 713, 24, 70, 792, 500, 16, 15, 1032, 505, 16, 20,
  93, 585, 38, 45, 112, 630, 30, 50, 195, 632, 28, 32, 214, 672, 16, 22, 307, 705, 28, 70, 340, 709, 26, 50, 361, 681, 26, 45, 629, 646, 32, 90, 681, 643, 26, 35, 711, 695, 28, 55, 676, 705, 24, 40, 602, 713, 34, 60, 616, 716, 30, 60, 625, 738, 32, 45, 626, 761, 24, 75, 582, 755, 22, 50, 643, 794, 24, 55, 613, 818, 22, 40, 676, 833, 22, 40, 717, 819, 24, 50, 690, 800, 20, 35, 793, 820, 32, 100, 848, 797, 28, 60, 823, 846, 24, 50, 652, 853, 24, 40, 655, 880, 22, 60, 598, 850, 22, 45, 637, 918, 28, 50, 632, 892, 18, 35, 780, 898, 28, 80, 788, 918, 22, 50, 789, 948, 24, 80, 743, 925, 24, 55, 718, 914, 18, 30, 767, 942, 18, 40, 855, 907, 22, 45, 899, 911, 20, 50, 924, 896, 22, 100, 807, 970, 18, 50, 811, 1000, 16, 100, 824, 1001, 14, 70, 838, 994, 18, 80, 720, 962, 22, 45, 697, 967, 20, 45, 678, 977, 24, 60, 720, 993, 22, 75, 710, 1011, 22, 90, 693, 1017, 26, 95, 738, 997, 20, 60, 616, 980, 22, 45, 459, 957, 28, 50, 282, 1004, 34, 50, 332, 872, 28, 30, 386, 803, 36, 60, 417, 788, 28, 40, 414, 846, 28, 55, 450, 768, 20, 40, 484, 801, 24, 35, 508, 765, 18, 20, 330, 778, 16, 20, 326, 911, 18, 18,
  516, 1077, 26, 65, 524, 1100, 26, 55, 571, 1026, 24, 35, 529, 990, 20, 30, 479, 1132, 26, 85, 423, 1124, 26, 45, 371, 1161, 24, 50, 403, 1166, 22, 60, 425, 1167, 20, 55, 467, 1166, 22, 60, 425, 1190, 22, 50, 484, 1186, 20, 50, 500, 1206, 22, 50, 473, 1210, 20, 55, 426, 1219, 20, 35, 457, 1247, 20, 45, 488, 1257, 22, 60, 510, 1228, 18, 45, 528, 1246, 26, 90, 546, 1239, 28, 100, 523, 1270, 26, 90, 518, 1282, 22, 80, 492, 1297, 20, 65, 565, 1222, 26, 60, 560, 1125, 24, 50, 545, 1160, 20, 35, 510, 1166, 20, 25, 418, 1272, 22, 40, 382, 1230, 22, 20, 412, 1384, 22, 30, 378, 1342, 20, 20, 595, 1106, 16, 30, 660, 1040, 26, 30, 572, 1065, 18, 25, 612, 1060, 18, 20,
];

const chunk = (a: number[], n: number) => Array.from({ length: a.length / n }, (_, i) => a.slice(i * n, i * n + n));

const lowOpacity = (x: number, y: number, r: number) => {
  if (x < -400) return 0.16;
  if (x < -90 && y > 340) return x === -102 ? 0.6 : 0.3;
  if (x < -300) return 0.55;
  if (x < 470 && y < 240 && y > 100 && r < 30) return 0.5;
  return r < 22 ? 0.32 : r < 27 ? 0.58 : 0.88;
};

function RasterMap() {
  return (
    <svg width="737" height="594" viewBox="0 0 737 594" className="ml-[84px] mt-[42px] block">
      <defs>
        <linearGradient id="base" x1="0" y1="0" x2=".15" y2="1">
          <stop offset="0" stopColor="#313131" /><stop offset=".35" stopColor="#303030" /><stop offset=".65" stopColor="#3a3a3a" /><stop offset="1" stopColor="#434343" />
        </linearGradient>
        <radialGradient id="lo"><stop offset="0" stopColor="#000" stopOpacity=".95" /><stop offset=".14" stopColor="#000" stopOpacity=".78" /><stop offset=".36" stopColor="#000" stopOpacity=".32" /><stop offset=".68" stopColor="#000" stopOpacity=".09" /><stop offset="1" stopColor="#000" stopOpacity="0" /></radialGradient>
        <radialGradient id="hi"><stop offset="0" stopColor="#fff" stopOpacity=".85" /><stop offset=".15" stopColor="#fff" stopOpacity=".55" /><stop offset=".38" stopColor="#fff" stopOpacity=".18" /><stop offset=".7" stopColor="#fff" stopOpacity=".06" /><stop offset="1" stopColor="#fff" stopOpacity="0" /></radialGradient>
        <radialGradient id="dk"><stop offset="0" stopColor="#0b0b0b" stopOpacity=".75" /><stop offset=".45" stopColor="#0e0e0e" stopOpacity=".45" /><stop offset="1" stopColor="#181818" stopOpacity="0" /></radialGradient>
        <radialGradient id="lt"><stop offset="0" stopColor="#4c4c4c" /><stop offset="1" stopColor="#4c4c4c" stopOpacity="0" /></radialGradient>
        <filter id="b30" x="-50%" y="-50%" width="200%" height="200%"><feGaussianBlur stdDeviation="24" /></filter>
        <filter id="b12" x="-50%" y="-50%" width="200%" height="200%"><feGaussianBlur stdDeviation="13" /></filter>
      </defs>
      <rect width="737" height="594" fill="url(#base)" />
      <ellipse cx="350" cy="115" rx="340" ry="180" fill="url(#dk)" />
      <ellipse cx="310" cy="135" rx="120" ry="45" fill="url(#dk)" />
      <ellipse cx="130" cy="215" rx="130" ry="80" fill="url(#dk)" opacity=".5" />
      <ellipse cx="500" cy="490" rx="220" ry="130" fill="url(#lt)" opacity=".8" />
      <path d="M300 210L420 225L470 250L580 230L560 330L530 400L470 430L430 470L400 520L340 480L330 400L270 310L255 260Z" fill="#484848" filter="url(#b30)" opacity=".8" />
      <path d="M420 270L500 270L540 300L520 370L480 420L440 430L400 500L360 490L370 420L340 380L345 330L400 330Z" fill="#727272" filter="url(#b30)" opacity=".72" />
      <path d="M420 310L450 300L480 370L500 390L470 418L440 400L425 360ZM355 475L400 455L420 485L400 512L365 500Z" fill="#8d8d8d" filter="url(#b12)" opacity=".6" />
      <path d="M405 135Q480 125 600 160Q640 200 590 255Q562 300 563 350Q545 400 500 422Q450 430 423 455L420 500L370 560" stroke="#050505" strokeWidth="20" fill="none" filter="url(#b12)" opacity=".5" />
      <path d="M310 510L390 525M295 360L290 400M395 190L405 270" stroke="#080808" strokeWidth="28" fill="none" filter="url(#b12)" opacity=".45" />
      <g transform="translate(231 80) scale(.33333)">
        {chunk(high, 4).map(([x, y, r, o], i) => <circle key={i} cx={x} cy={y} r={r * 1.15} fill="url(#hi)" opacity={(o / 100) * 0.78} />)}
        {chunk(low, 3).map(([x, y, r], i) => <circle key={i} cx={x} cy={y} r={r * 1.05} fill="url(#lo)" opacity={lowOpacity(x, y, r)} />)}
        {chunk(high, 4).filter((p) => p[3] > 70).map(([x, y, r, o], i) => <circle key={i} cx={x} cy={y} r={r * 0.45} fill="url(#hi)" opacity={(o - 40) / 110} />)}
      </g>
    </svg>
  );
}

/* ---------- right docks ---------- */

const Check = ({ className = "" }: P) => (
  <Svg s={14} className={className}><rect x=".5" y=".5" width="13" height="13" fill="#fff" stroke="#b5b5b5" /><path d="M3.500 7l2.500 3.500L10.500 3" stroke="#000" strokeWidth="1.700" /></Svg>
);

const RasterIcon = () => (
  <Svg><rect x="1" y="1" width="14" height="14" fill="#cfdceb" /><path d="M1 1h4v4H1zM5 5h4v4H5zM10 1h5v4h-5zM10 10h5v5h-5z" fill="#26384f" /><path d="M1 5h4v5H1zM5 10h5v5H5zM9 5h6v5H9z" fill="#8facd0" /><path d="M5 5h4v4H5z" fill="#1d2c3f" /></Svg>
);

function Layers() {
  return (
    <div className="flex h-[336px] shrink-0 flex-col">
      <div className="flex h-[20px] items-center pl-[4px] pr-[2px] text-[11px]"><span className="grow">Camadas</span><DockButtons /></div>
      <div className="flex h-[30px] items-center pb-[3px] pl-[7px]">
        <AddIcon />
        <Svg className="ml-[10px]"><path d="M1.500 6.500h7v7h-7zM4 6V4h7v8H9M7 4V1.500h6v9h-2" stroke="#888" /><path d="M9 2v7" stroke="#3c6e9c" strokeWidth="1.500" /><rect x="9" y="10" width="6" height="6" rx="1" fill="#4f8c58" /><path d="M12 11v4M10 13h4" stroke="#fff" /></Svg>
        <Svg className="ml-[10px]"><path d="M0 8c3-6 12-6 15 0-3 5-12 5-15 0z" fill="#f4f4f4" stroke="#999" /><circle cx="7.500" cy="7.500" r="3.500" fill="#6187ae" /><circle cx="7.500" cy="7.500" r="1.500" fill="#1e3147" /><path d="M11 12h5l-2.500 3z" fill="#555" /></Svg>
        <span className="ml-[8px]"><Filter /></span>
        <Svg className="ml-[10px]"><path d="M7 3C4 1 1 2 1.500 4.500 2 6 4 6 5 6 3 6 1 7 1 9c0 3 4 3 6 1" stroke="#c2c2c2" strokeWidth="1.500" /><path d="M8 15V9c0-2 5-2 5 0v6" stroke="#c8c8c8" strokeWidth="2" /></Svg>
        <Caret className="ml-[5px]" color="#aaa" />
        <span className="ml-[8px]"><TreeArrow down /></span>
        <span className="ml-[9px]"><TreeArrow /></span>
        <Svg className="ml-[9px]"><rect x="1.500" y="1.500" width="11.500" height="12" stroke="#888" /><rect x="9" y="10.500" width="6" height="4.500" rx="1" fill="#e2474f" /><path d="M10 12.700h4" stroke="#fff" /></Svg>
      </div>
      <div className="flex h-[286px] flex-col border border-r-0 border-[#b0b0b0] bg-white text-[12.700px]">
        <div className="grow overflow-hidden">
          <div className="flex h-[18px] items-center pl-[23px]"><Check /><div className="mx-[6px]"><RasterIcon /></div><span className="grow pt-[2px] font-bold underline underline-offset-2"><span className="tracking-[0.25px]">Interpolado</span></span>
            <Svg className="mr-[5px]"><rect x=".5" y=".5" width="15" height="15" rx="1" fill="#fafafa" stroke="#d5d5d5" /><rect x="3" y="5" width="10" height="6.500" rx="1.500" stroke="#858585" /><path d="M4.500 3v2M7 3v2M9.500 3v2M12 3v2M4.500 11.500v2M7 11.500v2M9.500 11.500v2M12 11.500v2" stroke="#858585" /></Svg>
          </div>
          <div className="flex h-[18px] items-center pl-[43px]"><div className="mr-[6px] size-[16px] bg-black" /><span className="pt-[2px]">7.20921</span></div>
          <div className="flex h-[18px] items-center pl-[65px]"><span className="pt-[2px]">1771.4</span></div>
          <div className="flex h-[18px] items-center pl-[23px]"><Check /><Svg className="mx-[6px]"><circle cx="8" cy="8" r="2.500" fill="#b04848" stroke="#6e3535" strokeWidth=".7" /></Svg><span className="whitespace-nowrap pt-[2px] font-bold tracking-[0.05px]">CatalogoEstaçõesAutomática</span></div>
          <div className="flex h-[18px] items-center pl-[23px]"><Check /><div className="mx-[6px] size-[16px] border border-[#8a8a8a] bg-white" /><span className="pt-[2px] font-bold tracking-[0.2px]">BR_Pais_2021</span></div>
        </div>
        <div className="flex h-[14px] shrink-0 border-t border-[#b5b5b5] bg-[#f4f4f4]">
          <div className="flex w-[14px] items-center justify-center border-r border-[#b5b5b5]"><svg width="5" height="7"><path d="M5 0v7L.5 3.500z" fill="#444" /></svg></div>
          <div className="grow bg-gradient-to-b from-[#f0f0f0] to-[#fcfcfc]" />
          <div className="w-[12px] border-x border-[#bdbdbd] bg-[#dedede]" />
          <div className="flex w-[14px] items-center justify-center"><svg width="5" height="7"><path d="M0 0v7l4.500-3.500z" fill="#444" /></svg></div>
        </div>
      </div>
    </div>
  );
}

const Clock = () => <Svg><circle cx="8" cy="8" r="7" fill="#f6f6f6" stroke="#888" strokeWidth="1.200" /><path d="M8 3.500V8l3 2.500" stroke="#888" strokeWidth="1.100" /></Svg>;
const Idw = () => (
  <Svg><rect width="16" height="16" fill="#8e8e8e" /><path d="M0 0h6v6H0zM6 10h5v6H6z" fill="#686868" /><path d="M0 6h6v4H0zM11 9h5v7h-5z" fill="#a9a9a9" /><path d="M0 11h4v5H0z" fill="#505050" /><circle cx="9" cy="6" r="1.200" fill="#bcd2ed" /><circle cx="14" cy="2" r="1.200" fill="#c96565" /><circle cx="1.500" cy="10.500" r="1.200" fill="#d06060" /><circle cx="11" cy="13" r="1.200" fill="#9ebbe0" /></Svg>
);
const Grass = () => (
  <Svg s={15}><path d="M7.500 2.500l6.500 6-6.500 6L1 8.500z" fill="#fff" stroke="#444" /><path d="M7.500 .7L14 6.500l-6.500 6L1 6.500z" fill="#edf5ed" stroke="#777" strokeWidth=".8" /><path d="M7.500 13L4 6M7.500 13L7.300 3M7.500 13l3.500-7M7.500 12L3 8M7.500 12l4.500-4" stroke="#38a353" strokeWidth="1.200" /></Svg>
);
const Q = () => <Svg><circle cx="7.500" cy="7.500" r="5.500" stroke="#5f9a36" strokeWidth="3" /><path d="M7 7h3l5.500 6.500v2H13z" fill="#7eb63b" /><path d="M7 7h3l1.500 2-2 2z" fill="#e4a431" /></Svg>;

const Row = ({ className, icon, dir, label }: { className: string; icon?: React.ReactNode; dir?: string; label: string }) => (
  <div className={`flex items-center whitespace-nowrap ${className}`}>
    {dir && <div className="mr-[9px]"><Twisty dir={dir} /></div>}
    {icon && <div className="mr-[6px]">{icon}</div>}
    <span className="pt-[2px]">{label}</span>
  </div>
);

function Toolbox() {
  return (
    <div className="flex min-h-0 grow flex-col">
      <div className="flex h-[7px] shrink-0 items-center justify-center"><svg width="17" height="1"><path d="M0 .5h17" stroke="#aaa" strokeDasharray="1 2" /></svg></div>
      <div className="flex h-[20px] shrink-0 items-center pl-[4px] pr-[2px] text-[11px]"><span className="grow whitespace-nowrap tracking-[0.02px]">Caixa de Ferramentas de processamento</span><DockButtons /></div>
      <div className="flex h-[30px] shrink-0 items-center pb-[2px]">
        <Svg s={18} className="ml-[7px]"><path d="M6 1v10M1 6h10M2.500 2.500l7 7M9.500 2.500l-7 7" stroke="#c22f2f" strokeWidth="2.200" /><path d="M13 5v7M9.500 8.500h7M10.500 6l5 5M15.500 6l-5 5" stroke="#7d7d7d" strokeWidth="1.400" /><circle cx="8" cy="13.500" r="2.700" fill="#7da0ca" /><path d="M13 14h5l-2.500 3z" fill="#444" /></Svg>
        <Svg s={18} className="ml-[8px]"><g transform="scale(.8)"><Python /></g><path d="M12.500 13.500h5L15 16.500z" fill="#444" /></Svg>
        <span className="ml-[7px]"><Clock /></span>
        <Svg className="ml-[9px]"><path d="M2.500 1.500h7l4 4v9h-11z" fill="#f2f2f2" stroke="#9c9c9c" /><path d="M5 5.500h4M5 8h6M5 10h6M5 12h6" stroke="#999" /></Svg>
        <Sep className="ml-[8px] !h-[11px]" />
        <Svg className="ml-[7px]"><path d="M1.500 2h11v8h-11z" fill="#d8d5c8" stroke="#ccc8ba" /><path d="M13 4l2 2-5 7-3 2 1-4z" fill="#ddd8d4" stroke="#c6c0bb" /></Svg>
        <Sep className="ml-[8px] !h-[11px]" />
        <Svg s={18} className="ml-[6px]"><path d="M1 3l3-2 4 2v4l8 8" stroke="#7a7a7a" strokeWidth="1.300" /><path d="M2 5l3 2 3-3" stroke="#999" strokeWidth="1.500" /><path d="M8.500 8l7.500 7" stroke="#a58a20" strokeWidth="4" /><path d="M9 8.500l6.500 6" stroke="#e8cc58" strokeWidth="2.500" /></Svg>
      </div>
      <div className="flex h-[24px] shrink-0 items-center rounded-[3px] border border-r-0 border-[#ababab] bg-white text-[12.700px]">
        <Svg s={14} className="ml-[7px]"><circle cx="5.500" cy="5.500" r="4.300" stroke="#8e8e8e" strokeWidth="1.200" /><path d="M8.800 8.800l4 4" stroke="#8e8e8e" strokeWidth="1.300" /></Svg>
        <span className="ml-[7px] grow pt-[2px]">IDW</span>
        <svg width="13" height="10" className="mr-[9px]"><path d="M4 0h9v10H4L0 5z" fill="#7d7d7d" /><path d="M5 2.500l5 5M10 2.500l-5 5" stroke="#fff" /></svg>
      </div>
      <div className="grow border border-r-0 border-[#b0b0b0] bg-white text-[12.700px]">
        <Row className="h-[18px] pl-[5px]" dir="d" icon={<Clock />} label="Usado recentemente" />
        <Row className="h-[18px] bg-[#b2d6fd] pl-[43px]" icon={<Idw />} label="Interpolação IDW" />
        <Row className="h-[18px] pl-[5px]" dir="d" icon={<Q />} label="Interpolar" />
        <Row className="h-[18px] pl-[43px]" icon={<Idw />} label="Interpolação IDW" />
        <Row className="h-[18px] pl-[5px]" dir="d" icon={<div className="pr-px"><Grass /></div>} label="GRASS" />
        <Row className="h-[17px] pl-[25px]" dir="d" label="Raster (r.*)" />
        <Row className="h-[17px] pl-[64px]" icon={<Grass />} label="r.fill.stats" />
        <Row className="h-[18px] pl-[64px]" icon={<Grass />} label="r.surf.idw" />
        <Row className="h-[17px] pl-[25px]" dir="d" label="Vetor (v.*)" />
        <Row className="h-[17px] pl-[64px]" icon={<Grass />} label="v.surf.idw" />
      </div>
    </div>
  );
}

/* ---------- status bar ---------- */

const Field = ({ className = "", children }: P) => (
  <div className={`flex shrink-0 items-center overflow-hidden whitespace-nowrap rounded-[2px] border border-[#a9a9a9] bg-white [&>span]:pt-[2px] ${className}`}>{children}</div>
);
const Stepper = () => (
  <div className="ml-auto flex h-full w-[14px] flex-col items-center justify-center gap-[4px] border-l border-[#b5b5b5] bg-[#f6f6f6]">
    <svg width="7" height="4"><path d="M0 4L3.500 0 7 4z" fill="#555" /></svg>
    <svg width="7" height="4"><path d="M0 0l3.500 4L7 0z" fill="#555" /></svg>
  </div>
);

function StatusBar() {
  return (
    <div className="flex h-[30px] shrink-0 items-center text-[11px] [&>span]:pt-[2px]">
      <Field className="ml-[4px] h-[24px] w-[306px] text-[12.800px] text-[#7a7a7a]">
        <Svg s={14} className="ml-[8px] mr-[6px]"><circle cx="5.500" cy="5.500" r="4.300" stroke="#8e8e8e" strokeWidth="1.200" /><path d="M8.800 8.800l4 4" stroke="#8e8e8e" strokeWidth="1.300" /></Svg>
        <span>Escrever para localizar (⌘K)</span>
      </Field>
      <span className="ml-[8px] w-[290px] shrink-0 whitespace-nowrap tracking-[0.04px]">1 legend entries removed.</span>
      <span className="w-[67px] shrink-0">Coordenada</span>
      <Field className="h-[22px] w-[75px] pl-[6px]"><span className="text-[11.200px]">-27.34,8.32</span></Field>
      <Svg className="ml-[4px]"><rect x="2" y="1" width="8" height="10" rx="4" transform="rotate(-35 6 6)" fill="#fff" stroke="#222" strokeWidth="1.300" /><path d="M3 3l6 8M6 2l5 7M1 7l6 7M12 3l3-2M12 6l4-1M10 2l1-2" stroke="#222" strokeWidth="1.100" /><circle cx="11" cy="11.500" r="3.500" fill="#ddd" stroke="#333" /></Svg>
      <span className="ml-[13px] w-[37px] shrink-0">Escala</span>
      <Field className="h-[24px] w-[94px] pl-[3px]"><span className="text-[11.200px]">1:18097292</span><div className="ml-auto flex h-full w-[20px] items-center justify-center border-l border-[#b5b5b5] bg-[#f4f4f4]"><Caret color="#555" /></div></Field>
      <svg width="12" height="15" className="ml-[12px] shrink-0"><path d="M3 7V4.500a3 3 0 0 1 6 0V7" stroke="#8a8a8a" strokeWidth="1.500" fill="none" /><rect y="6.500" width="12" height="8.500" rx="1" fill="#5d5d5d" /></svg>
      <span className="ml-[9px] w-[29px] shrink-0">Lupa</span>
      <Field className="h-[24px] w-[91px] pl-[4px]"><span>100%</span><Stepper /></Field>
      <span className="ml-[8px] w-[52px] shrink-0">Rotação</span>
      <Field className="h-[22px] w-[92px] pl-[4px]"><span>0,0 °</span><Stepper /></Field>
      <Check className="ml-[6px]" />
      <span className="ml-[5px] w-[73px] shrink-0">Renderizar</span>
      <Svg><path d="M8 1l7 7-7 6-7-6z" fill="#bbb" stroke="#777" /><ellipse cx="8" cy="7.500" rx="6" ry="6" fill="#aaa" stroke="#777" /><ellipse cx="8" cy="7.500" rx="3" ry="6" stroke="#666" /><path d="M1 7.500h14M3 4.500h10M3 10.500h10" stroke="#666" /></Svg>
      <span className="w-[83px] shrink-0">EPSG:4674</span>
      <svg width="17" height="15" viewBox="0 0 17 15" className="shrink-0"><path d="M8 0.500c5 0 8 2 8 5.500 0 2-1 3.500-2 4.300L15.500 14 11 11.500H8C3 11.500.5 9.500.5 6S3 .500 8 .5z" fill="#5b5b5b" /><circle cx="5" cy="6" r="1" fill="#fff" /><circle cx="8.300" cy="6" r="1" fill="#fff" /><circle cx="11.600" cy="6" r="1" fill="#fff" /></svg>
    </div>
  );
}

/* ---------- menus ---------- */

const Arrow = () => <svg width="9" height="10" className="ml-auto mr-[12px]"><path d="M0 .3v9.400L9 5z" fill="currentColor" /></svg>;

const ClipIcon = () => (
  <Svg><rect width="16" height="16" fill="#dde8ee" /><path d="M2 2h4v4H2zM6 6h4v4H6z" fill="#2e566e" /><path d="M6 2h4v4H6zM2 6h4v4H2z" fill="#7899ab" /><path d="M10 2h3v4h-3zM10 6h3v4h-3zM6 10h4v3H6z" fill="#b1c8d5" /></Svg>
);

function RasterMenu() {
  return (
    <div className="absolute left-[659px] top-[22px] h-[164px] w-[219px] rounded-b-[5px] bg-gradient-to-b from-[#e6e6e6] to-[#cfcfcf] pt-[4px] text-[13.700px] text-[#1c1c1c] shadow-[0_5px_14px_rgba(0,0,0,0.4)]">
      <div className="flex h-[20px] items-center pl-[21px]">
        <Svg className="mr-[4px]"><path d="M0 0h4v4H0zM4 4h4v4H4z" fill="#254a60" /><path d="M4 0h4v4H4zM0 4h4v4H0z" fill="#7396ab" /><rect x="4.500" y="4.500" width="11" height="11" fill="#e5e5df" stroke="#777" /><path d="M9 6h5" stroke="#e22" strokeWidth="2" /><path d="M6 9.500h8" stroke="#4a9c5a" strokeWidth="1.500" strokeDasharray="2 1" /><path d="M6 13h8" stroke="#386f9c" strokeWidth="2" strokeDasharray="2 1" /></Svg>
        <span className="pt-[2px]">Calculadora Raster...</span>
      </div>
      <div className="flex h-[20px] items-center whitespace-nowrap pl-[21px]"><span className="pt-[2px]">Alinhar Imagens (Rasters)...</span></div>
      <div className="flex h-[20px] items-center pl-[21px]">
        <Svg className="mr-[4px]"><path d="M3 2l2 10 7 2M9 1l3 7 3 6" stroke="#9ebed6" /><path d="M4.500 0v16M11.500 0v16M0 4.500h16M0 11.500h16" stroke="#444" /></Svg>
        <span className="pt-[2px]">Georreferenciador...</span>
      </div>
      <div className="flex h-[20px] items-center pl-[21px]"><span className="pt-[2px]">Análise</span><Arrow /></div>
      <div className="flex h-[19px] items-center pl-[21px]">Projeções<Arrow /></div>
      <div className="flex h-[19px] items-center pl-[21px]">Miscelânea<Arrow /></div>
      <div className="flex h-[19px] items-center bg-[#1f70f3] pl-[21px] text-white">Extrair<Arrow /></div>
      <div className="flex h-[19px] items-center pl-[21px]">Converter<Arrow /></div>
    </div>
  );
}

function ExtractMenu() {
  return (
    <div className="absolute left-[878px] top-[139px] h-[72px] w-[333px] rounded-[5px] rounded-tl-none bg-gradient-to-r from-[#bfbfbf] via-[#c6c6c6] to-[#e3e3e3] pt-[5px] text-[13.650px] text-[#1c1c1c] shadow-[0_5px_14px_rgba(0,0,0,0.4)]">
      <div className="flex h-[21px] items-center gap-[4px] pl-[21px]"><ClipIcon />Recortar raster pela extensão...</div>
      <div className="flex h-[21px] items-center gap-[4px] whitespace-nowrap bg-gradient-to-r from-[#0c5ddd] to-[#2a7bfd] pl-[21px] text-white"><ClipIcon />Recortar raster pela camada de máscara...</div>
      <div className="flex h-[21px] items-center gap-[4px] pl-[21px]">
        <Svg><rect width="16" height="16" fill="#a2a2a2" /><path d="M8 9h8v7H9z" fill="#626262" /><path d="M2 16V8c0-4 3-6 7-6s5 1 7 3M6 15c-1-5 0-8 4-8s5 3 6 4M9 13c0-4 4-3 5 0" stroke="#8d3039" strokeWidth="1.200" /></Svg>
        Contorno...
      </div>
    </div>
  );
}

export default function App() {
  return (
    <div className="relative flex h-[900px] w-[1440px] flex-col overflow-hidden bg-[#ebebeb] font-['Inter','Noto_Sans',sans-serif] leading-none text-black">
      <MenuBar />
      <div className="h-[21px] shrink-0 bg-[#c0c0c0]">
        <div className="flex h-[21px] items-center gap-[8px] rounded-t-[5px] border-b border-[#b5b5b5] bg-gradient-to-b from-[#e6e4e6] to-[#d0ced0] pl-[8px] pt-[2px]">
          <div className="size-[12px] rounded-full border border-[#e33e3a] bg-[#fc4845]" />
          <div className="size-[12px] rounded-full border border-[#b9b7b9] bg-[#cdcbcd]" />
          <div className="size-[12px] rounded-full border border-[#0eb932] bg-[#13ce3e]" />
        </div>
      </div>
      <ToolbarMain />
      <ToolbarSelection />
      <div className="flex min-h-0 grow pt-px">
        <Browser />
        <div className="flex w-[6px] shrink-0 items-center justify-center"><Handle h={17} /></div>
        <div className="w-[856px] shrink-0 border border-[#b0b0b0] bg-white"><RasterMap /></div>
        <div className="w-[6px] shrink-0" />
        <div className="flex w-[254px] shrink-0 flex-col"><Layers /><Toolbox /></div>
      </div>
      <StatusBar />
      <RasterMenu />
      <ExtractMenu />
      <div className="absolute left-[1176px] top-[82px] flex h-[61px] w-[65px] items-center justify-center rounded-[50%] bg-[#fe0000] pr-[2px] font-['Liberation_Sans',sans-serif] text-[42px] text-black">7</div>
    </div>
  );
}
